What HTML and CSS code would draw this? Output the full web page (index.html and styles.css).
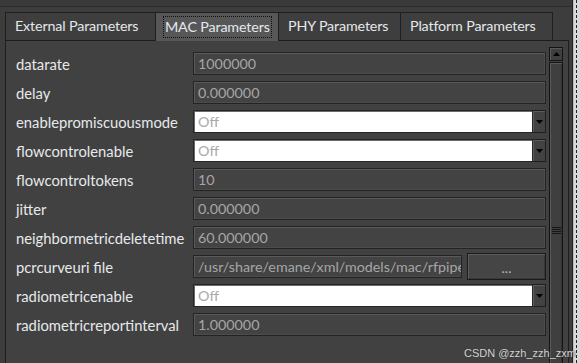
FILE: index.html
```html
<!DOCTYPE html>
<html>
<head>
<meta charset="utf-8">
<link rel="stylesheet" href="styles.css">
</head>
<body>
<div class="screen">
  <div class="window">
    <div class="topline"></div>
    <div class="tabs">
      <div class="tab tab-ext">External Parameters</div>
      <div class="tab tab-mac active"><span class="focus">MAC Parameters</span></div>
      <div class="tab tab-phy">PHY Parameters</div>
      <div class="tab tab-plat">Platform Parameters</div>
    </div>
    <div class="panel">
      <div class="form">
        <div class="label">datarate</div>
        <div class="field">1000000</div>

        <div class="label">delay</div>
        <div class="field">0.000000</div>

        <div class="label">enablepromiscuousmode</div>
        <div class="combo"><div class="combo-box">Off</div><div class="combo-btn"><svg width="7" height="4" viewBox="0 0 7 4"><path d="M0 0H7L3.5 4Z" fill="#000"/></svg></div></div>

        <div class="label">flowcontrolenable</div>
        <div class="combo"><div class="combo-box">Off</div><div class="combo-btn"><svg width="7" height="4" viewBox="0 0 7 4"><path d="M0 0H7L3.5 4Z" fill="#000"/></svg></div></div>

        <div class="label">flowcontroltokens</div>
        <div class="field">10</div>

        <div class="label">jitter</div>
        <div class="field">0.000000</div>

        <div class="label">neighbormetricdeletetime</div>
        <div class="field">60.000000</div>

        <div class="label">pcrcurveuri file</div>
        <div class="filerow"><div class="field path">/usr/share/emane/xml/models/mac/rfpipe/</div><div class="browse">...</div></div>

        <div class="label">radiometricenable</div>
        <div class="combo"><div class="combo-box">Off</div><div class="combo-btn"><svg width="7" height="4" viewBox="0 0 7 4"><path d="M0 0H7L3.5 4Z" fill="#000"/></svg></div></div>

        <div class="label">radiometricreportinterval</div>
        <div class="field">1.000000</div>
      </div>
      <div class="scrollbar">
        <div class="sb-up"><svg width="7" height="4" viewBox="0 0 7 4"><path d="M0 4H7L3.5 0Z" fill="#000"/></svg></div>
        <div class="sb-thumb"><div class="grip"></div></div>
      </div>
    </div>
  </div>
  <div class="edge"><div class="dots"></div></div>
  <div class="watermark">CSDN @zzh_zzh_zxm</div>
</div>
</body>
</html>
```

FILE: styles.css
```css
* { box-sizing: border-box; }
html, body { margin: 0; padding: 0; background: #3c3c3c; }
body { font-family: Lato, "Open Sans", sans-serif; }

.screen {
  position: relative;
  display: flex;
  width: 580px;
  height: 363px;
  overflow: hidden;
}

.window {
  width: 573px;
  height: 363px;
  background: #3d3d3d;
  border-right: 1px solid #232323;
  flex: none;
}

.topline {
  height: 7px;
  background: #3a3a3a;
  border-bottom: 1px solid #2a2a2a;
}

.tabs {
  display: flex;
  padding-left: 5px;
  margin-top: 5px;
  height: 28px;
  position: relative;
  z-index: 2;
}

.tab {
  flex: none;
  height: 28px;
  padding: 0 0 0 9px;
  border: 1px solid #1f1f1f;
  border-bottom: none;
  margin-right: -1px;
  background: #3e3e3e;
  color: #e4e8ec;
  font-size: 14.3px;
  letter-spacing: -0.15px;
  line-height: 26px;
  white-space: nowrap;
  overflow: hidden;
}

.tab-ext { width: 151px; }
.tab-mac { width: 124px; }
.tab-phy { width: 123px; }
.tab-plat { width: 153px; }

.tab.active {
  background: #575757;
  height: 29px;
  padding: 3px 0 0 7px;
  line-height: 20px;
}

.focus {
  display: inline-block;
  border: 1px dotted #111;
  padding: 0 1px;
  height: 22px;
  white-space: nowrap;
}

.panel {
  display: flex;
  margin-left: 5px;
  width: 564px;
  height: 360px;
  border: 1px solid #1d1d1d;
  background: #414141;
  padding: 6px 5px 0 10px;
}

.form {
  display: grid;
  grid-template-columns: 177px 353px;
  grid-auto-rows: 23px;
  row-gap: 6px;
  margin-top: 5px;
  align-self: flex-start;
}

.label {
  align-self: center;
  color: #e6e9ec;
  font-size: 14.8px;
  line-height: 18px;
  white-space: nowrap;
}

.field {
  height: 23px;
  background: #434343;
  border: 1px solid #232323;
  box-shadow: inset 1px 1px 0 #5a5a5a, inset -1px -1px 0 #4c4c4c;
  color: #a6a6a6;
  font-size: 14.3px;
  line-height: 21px;
  padding-left: 4px;
  white-space: nowrap;
  overflow: hidden;
}

.combo {
  display: flex;
  height: 23px;
}

.combo-box {
  width: 340px;
  height: 23px;
  background: #ffffff;
  border: 1px solid #262626;
  box-shadow: inset 1px 1px 0 #6a6a6a;
  color: #a9a9a9;
  font-size: 14.3px;
  line-height: 21px;
  padding-left: 4px;
}

.combo-btn {
  width: 13px;
  height: 23px;
  background: #424242;
  border: 1px solid #1e1e1e;
  border-left: none;
  box-shadow: inset 1px 1px 0 #5c5c5c;
  display: flex;
  align-items: center;
  justify-content: center;
}

.filerow {
  display: flex;
  gap: 5px;
  height: 23px;
  align-items: center;
}

.path {
  width: 269px;
  flex: none;
}

.browse {
  width: 79px;
  height: 27px;
  flex: none;
  background: #454545;
  border: 1px solid #1a1a1a;
  box-shadow: inset 1px 1px 0 #5e5e5e, inset -1px -1px 0 #383838;
  color: #b8b8b8;
  font-size: 14px;
  text-align: center;
  line-height: 27px;
}

.scrollbar {
  width: 14px;
  margin-left: 3px;
  display: flex;
  flex-direction: column;
  gap: 1px;
}

.sb-up {
  height: 14px;
  background: #3f3f3f;
  border: 1px solid #141414;
  box-shadow: inset 1px 1px 0 #5a5a5a;
  display: flex;
  align-items: center;
  justify-content: center;
}

.sb-thumb {
  height: 342px;
  background: #3f3f3f;
  border: 1px solid #141414;
  box-shadow: inset 1px 1px 0 #5a5a5a, inset -1px 0 0 #333;
  display: flex;
  align-items: center;
  justify-content: center;
}

.grip {
  width: 9px;
  height: 7px;
  background: repeating-linear-gradient(to bottom, #151515 0 1px, transparent 1px 2px);
}

.edge {
  flex: 1;
  background: #d9d9d9;
  border-left: 1px solid #bcbcbc;
  padding-left: 2px;
}

.dots {
  height: 100%;
  border-left: 1px dashed #222;
}

.watermark {
  position: absolute;
  right: 4px;
  bottom: 4px;
  font-family: "Liberation Sans", Arial, sans-serif;
  font-size: 11px;
  color: #d2d2d2;
  text-shadow: 0 0 1px #333;
}
```
